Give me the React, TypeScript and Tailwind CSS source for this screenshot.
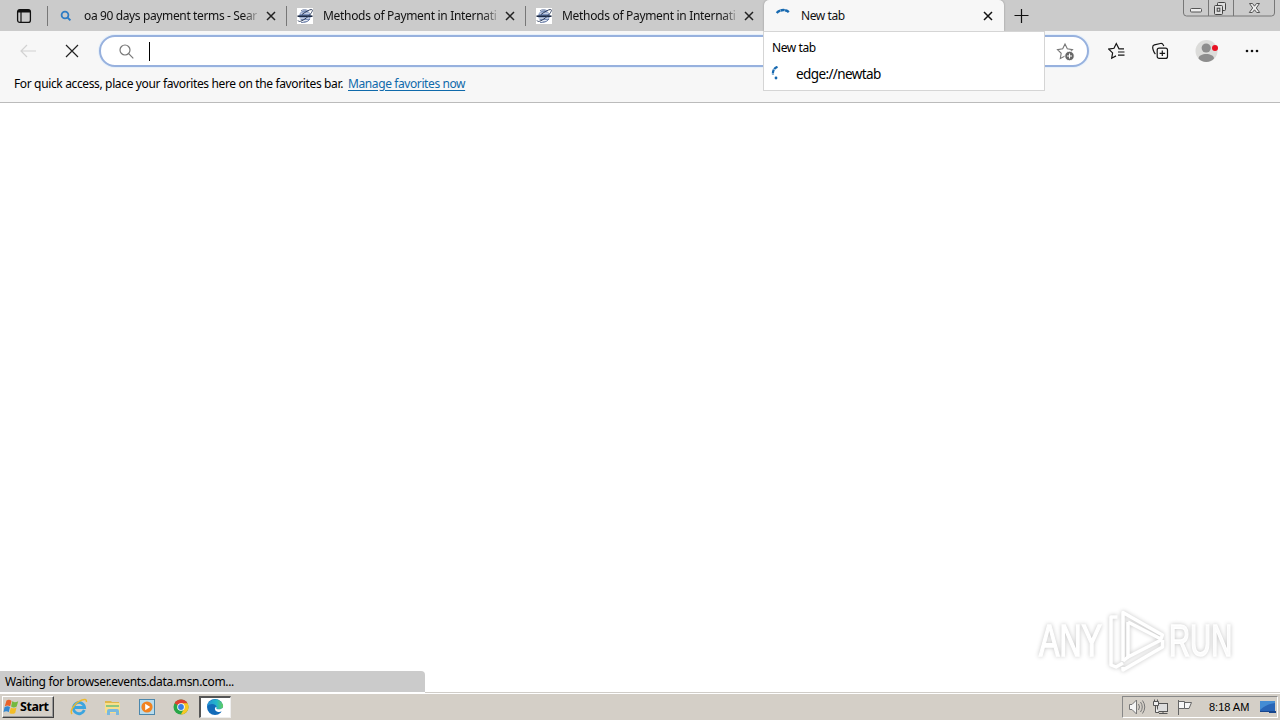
import { ReactNode } from "react";
import clsx from "clsx";

interface TabProps {
    title: string,
    icon: ReactNode,
    titleClass: string
}

function CloseIcon({ color = "#222" }: { color?: string }) {
    return (
        <svg width="10" height="10" viewBox="0 0 10 10" fill="none" stroke={color} strokeWidth="1.5">
            <path d="M1 1l8 8M9 1L1 9" />
        </svg>
    )
}

function SearchFavicon() {
    return (
        <svg width="12" height="12" viewBox="0 0 12 12" fill="none" stroke="#2f7cc4" strokeWidth="1.8">
            <circle cx="5" cy="5" r="3.4" />
            <path d="M7.4 7.4l3 3" strokeWidth="2" />
        </svg>
    )
}

function GlobeFavicon() {
    return (
        <svg width="16" height="16" viewBox="0 0 16 16" fill="none">
            <rect width="16" height="16" fill="#fff" />
            <circle cx="8" cy="8" r="5.8" fill="#7d93bd" />
            <path d="M3.5 5.2h9M2.5 10.2h10M5 12.5h6" stroke="#e4eaf4" strokeWidth="1" />
            <path d="M0.5 8.2h15" stroke="#1d2b45" strokeWidth="1.6" />
            <path d="M1 12.5C2 15 7 12 11 8.5S16.5 1.5 14.5 1.5 9 3.5 5 6.5" stroke="#33415f" strokeWidth="1" />
            <path d="M4 2.8C6 1.3 9 1.6 11 2.6M4 14.4c3 .5 7-.4 9-3.4" stroke="#4b6191" strokeWidth="0.8" />
        </svg>
    )
}

function Tab({ title, icon, titleClass }: TabProps) {
    return (
        <div className="flex w-[239px] h-[31px] items-center relative">
            <span className="w-px h-5 bg-[#777] shrink-0" />
            {icon}
            <div className={clsx("whitespace-nowrap [mask-image:linear-gradient(to_right,black_90%,transparent)]", titleClass)}>{title}</div>
            <span className="absolute right-[10px] top-[11px]"><CloseIcon /></span>
        </div>
    )
}

function TabStrip() {
    return (
        <header className="flex h-[31px] bg-[#cbcbcb] text-[12px] text-[#111] relative">
            <div className="w-[47px] h-[31px] flex items-center justify-center">
                <svg width="16" height="16" viewBox="0 0 16 16" fill="none" stroke="#111">
                    <rect x="1.6" y="1.6" width="12.8" height="12.8" rx="2.2" strokeWidth="1.3" />
                    <path d="M2 3.2h12" strokeWidth="2.6" />
                    <path d="M5 4v10" strokeWidth="1.2" />
                </svg>
            </div>
            <Tab title="oa 90 days payment terms - Sear" titleClass="w-[177px] tracking-[-0.37px]" icon={<span className="w-[36px] pl-[12px] shrink-0"><SearchFavicon /></span>} />
            <Tab title="Methods of Payment in Internati" titleClass="w-[178px] tracking-[-0.31px]" icon={<span className="w-[36px] pl-[10px] shrink-0"><GlobeFavicon /></span>} />
            <Tab title="Methods of Payment in Internati" titleClass="w-[178px] tracking-[-0.31px]" icon={<span className="w-[36px] pl-[10px] shrink-0"><GlobeFavicon /></span>} />
            <div className="w-[240px] bg-[#f7f7f7] rounded-t-[5px] flex items-center relative shadow-[0_0_2px_#888]">
                <svg className="ml-[11px]" width="16" height="16" viewBox="0 0 16 16" fill="none" stroke="#1769b0" strokeWidth="2.4">
                    <path d="M1.7 5C5 1.2 11 1.2 14 4.4" strokeDasharray="4.2 .4" />
                </svg>
                <span className="ml-[10px] tracking-[-0.4px]">New tab</span>
                <span className="absolute right-[11px] top-[11px]"><CloseIcon color="#111" /></span>
            </div>
            <svg className="ml-[10px] mt-2" width="16" height="16" viewBox="0 0 16 16" stroke="#111" strokeWidth="1.2">
                <path d="M7.5 1v14M.5 7.5h14" />
            </svg>
            <WindowButtons />
        </header>
    )
}

function WindowButtons() {
    return (
        <svg className="ml-auto" width="98" height="18" viewBox="0 0 98 18" fill="none" stroke="#777">
            <path d="M1.5 0v13q0 3 3 3h85q3 0 3-3V0M26.5 0v16M51.5 0v16" />
            <rect x="8.5" y="8.5" width="11" height="3.5" rx="1" stroke="#555" fill="#eee" />
            <g stroke="#444" fill="#ddd">
                <rect x="35.5" y="2.5" width="8" height="8" rx="1" />
                <rect x="32.5" y="5.5" width="8" height="9" rx="1" />
                <rect x="35.2" y="8.2" width="2.6" height="3" />
            </g>
            <path d="M67.5 3.5h3l2 2.7 2-2.7h3L74.3 8l3.4 4.5h-3l-2.2-2.7-2.2 2.7h-3L70.7 8z" stroke="#555" fill="#eee" />
        </svg>
    )
}

function Toolbar() {
    return (
        <div className="flex h-[39px] pt-1 relative">
            <div className="w-[99px] flex h-8 items-center shrink-0">
                <svg className="ml-5" width="17" height="14" viewBox="0 0 17 14" fill="none" stroke="#d2d2d2" strokeWidth="1.2">
                    <path d="M16 7H1M7 1L1 7l6 6" />
                </svg>
                <svg className="ml-[28px]" width="14" height="14" viewBox="0 0 14 14" fill="none" stroke="#222" strokeWidth="1.2">
                    <path d="M1 1l12 12M13 1L1 13" />
                </svg>
            </div>
            <div className="w-[990px] h-8 rounded-full border-2 border-[#97b1de] bg-white flex items-center shrink-0 shadow-[0_0_0_1px_#e6f0fa]">
                <svg className="ml-[18px]" width="15" height="15" viewBox="0 0 15 15" fill="none" stroke="#777" strokeWidth="1.2">
                    <circle cx="6" cy="6" r="5" />
                    <path d="M9.7 9.7l4.6 4.6" />
                </svg>
                <span className="w-px h-[19px] bg-black ml-[15px]" />
                <svg className="ml-auto mr-[11px] mt-px" width="20" height="20" viewBox="0 0 20 20" fill="none">
                    <path d="M9 2l2.3 4.8 5.2.8-3.6 3.6.3 4.5L9 14l-4.7 2.4.9-5.1L1.5 7.6l5.2-.8z" stroke="#777" strokeWidth="1.1" />
                    <circle cx="13.5" cy="14" r="4.7" fill="#666" stroke="#fff" strokeWidth=".8" />
                    <path d="M11 14h5M13.5 11.5v5" stroke="#fff" strokeWidth="1.1" />
                </svg>
            </div>
            <div className="flex items-center h-8 shrink-0">
                <svg className="ml-[19px]" width="17" height="18" viewBox="0 0 17 18" fill="none" stroke="#151515" strokeWidth="1.2">
                    <path d="M16 6.8h-5L8.3 1.5 6 6.3l-5.2.8 3.8 3.8-.9 5.3L8 13.9M10 10h6.5M10 13.2h6.5" />
                </svg>
                <svg className="ml-[27px]" width="17" height="18" viewBox="0 0 17 18" fill="none" stroke="#151515" strokeWidth="1.2">
                    <rect x="5.2" y="6.1" width="10.3" height="10.3" rx="2" />
                    <path d="M10.3 8.5v5.6M7.6 11.3h5.5M3.4 12.2C1.7 10.5.6 6.5.7 5.2.7 4 1.4 3.2 2.4 2.9l6-1.4c1.4-.3 2.4.3 2.9 1.4l.5 1" />
                </svg>
                <svg className="ml-[26px]" width="26" height="24" viewBox="0 0 26 24">
                    <circle cx="11.5" cy="12" r="11" fill="#dcdcda" />
                    <circle cx="11.2" cy="9" r="4.6" fill="#8d8d8d" />
                    <path d="M3.5 19.5c0-6 15.5-6 15.5 0-3.5 4.5-12 4.5-15.5 0z" fill="#8d8d8d" />
                    <circle cx="20" cy="9" r="3" fill="#e81123" />
                </svg>
                <svg className="ml-[24px]" width="16" height="4" viewBox="0 0 16 4" fill="#111">
                    <circle cx="2" cy="2" r="1.3" />
                    <circle cx="7" cy="2" r="1.3" />
                    <circle cx="12" cy="2" r="1.3" />
                </svg>
            </div>
        </div>
    )
}

function TabPreview() {
    return (
        <aside className="absolute left-[763px] top-[31px] w-[282px] h-[60px] bg-white border border-[#d5d5d5] text-black">
            <p className="text-[12px] leading-4 mt-2 ml-2 tracking-[-0.4px]">New tab</p>
            <div className="flex items-center h-5 mt-2 ml-[7px]">
                <svg width="10" height="16" viewBox="0 0 10 16" fill="none" stroke="#1769b0" strokeWidth="2.2">
                    <path d="M6.5 .8Q1.2 3 2 8.7" strokeDasharray="4 .6" />
                    <circle cx="5" cy="12" r="1.4" fill="#1769b0" stroke="none" />
                </svg>
                <span className="ml-[15px] text-[13.5px] tracking-[-0.6px]">edge://newtab</span>
            </div>
        </aside>
    )
}

function Watermark() {
    return (
        <div className="absolute left-[1039px] top-[606px] flex items-center h-[70px] w-[200px] [filter:drop-shadow(0_0_2px_#c4c4c4)]">
            <span className="w-[66px] text-[45px] font-normal [font-family:'Liberation_Sans'] text-white origin-left scale-x-[0.68] [-webkit-text-stroke:1.5px_white]">ANY</span>
            <svg className="shrink-0" width="62" height="68" viewBox="0 0 62 68" fill="none" stroke="#fff" strokeWidth="3.5" strokeLinejoin="round">
                <path d="M18 54V5.5L57.5 28 56 32 23 15" />
                <path d="M12.5 10H6v48l5 2 7-4M23 15v35l33-17" />
                <path d="M18 60v3L57.5 40v-7M18 54l5-4" />
            </svg>
            <span className="ml-[2px] text-[45px] [font-family:'Liberation_Sans'] text-[#fcfcfc] origin-left scale-x-[0.65] [-webkit-text-stroke:1.5px_white]">RUN</span>
        </div>
    )
}

function QuickLaunch() {
    return (
        <div className="flex items-center h-6 ml-4">
            <svg width="18" height="18" viewBox="0 0 18 18" fill="none">
                <path d="M14.3 12A5.6 5.6 0 1 1 14.6 9.5H5" stroke="#3ba5df" strokeWidth="2.8" />
                <path d="M2 16C-.5 13 4 6 9 3.3s8-2.5 7.3.7" stroke="#edb92c" strokeWidth="1.5" />
            </svg>
            <svg className="ml-4" width="18" height="18" viewBox="0 0 18 18">
                <path d="M1 3h6l1 1h7v3H1z" fill="#dfb64b" />
                <path d="M1 5h15v10H1z" fill="#f8df8b" />
                <path d="M2 7h13v2H2z" fill="#8dc681" />
                <path d="M3 17v-4q0-2 2-2h8q2 0 2 2v4h-3v-3H6v3z" fill="#79b9de" />
            </svg>
            <svg className="ml-4" width="18" height="18" viewBox="0 0 18 18">
                <rect x="1.5" y="1.5" width="15" height="15" fill="#b8dced" stroke="#4b87ac" />
                <circle cx="9" cy="9" r="5.6" fill="#f18320" />
                <path d="M7.2 5.8v6.4l5-3.2z" fill="#fff" />
            </svg>
            <svg className="ml-4" width="18" height="18" viewBox="0 0 18 18">
                <circle cx="9" cy="9" r="7.5" fill="#28a647" />
                <path d="M9 9L2.5 5.2A7.5 7.5 0 0 1 15.5 5.2z" fill="#df4031" />
                <path d="M9 5.2h6.5A7.5 7.5 0 0 1 8.8 16.5L12.5 10z" fill="#f8c824" />
                <circle cx="9" cy="9" r="3.8" fill="#fff" />
                <circle cx="9" cy="9" r="2.9" fill="#397fe4" />
            </svg>
        </div>
    )
}

function Taskbar() {
    return (
        <footer className="h-[27px] bg-[#d4cfc7] border-t border-white flex items-center text-[12px] text-black">
            <button className="ml-[2px] w-[52px] h-[22px] border border-t-white border-l-white border-r-[#404040] border-b-[#404040] shadow-[inset_-1px_-1px_#999] flex items-center">
                <svg className="shrink-0" width="16" height="16" viewBox="0 0 15 16">
                    <path d="M3 1.5Q6 0 8 2L6.7 7.3Q4 5.5 1.3 7.3z" fill="#e8622a" />
                    <path d="M8.7 2.3Q11 4 14.7 2.2l-1.5 5.4q-3 1.8-5.6 0z" fill="#75b941" />
                    <path d="M1 8.2Q4 6.5 6.5 8.1l-1.3 5.2Q3 11.5 0 13.2z" fill="#3388d1" />
                    <path d="M7.4 8.5Q10 10.2 13 8.5l-1.3 5.4q-3 1.8-5.8 0z" fill="#f3bd27" />
                </svg>
                <span className="ml-px font-bold [font-family:'Noto_Sans'] text-[12.5px] tracking-[-0.45px]">Start</span>
            </button>
            <QuickLaunch />
            <div className="ml-[9px] w-[32px] h-[22px] bg-white border-t-2 border-l-2 border-t-[#555] border-l-[#555] border-r border-b border-r-[#eee] border-b-[#eee] flex items-center justify-center">
                <svg className="mr-px mb-px" width="18" height="18" viewBox="0 0 18 18">
                    <defs>
                        <linearGradient id="edgeTop" x1="0" x2="1">
                            <stop stopColor="#258fd7" />
                            <stop offset=".6" stopColor="#24b7c9" />
                            <stop offset="1" stopColor="#65ce58" />
                        </linearGradient>
                    </defs>
                    <circle cx="9" cy="9" r="8" fill="#126bb9" />
                    <path d="M1 8.5C2 .5 14-1.5 17 7c.7 3-1.7 4.6-5.4 4.2-1.6-.3-1.6-1-1-1.8C11 6.6 5 4 1 8.5z" fill="url(#edgeTop)" />
                    <path d="M10.6 9.5c-.6.8-.3 1.5 1 1.7 2.5.3 4.3-.3 5.4-1.7l1 4-1.3.3-1.2-.2c-2.3.9-5.2.3-6.2-1.4-.9-1.5-.2-2.6.7-3.4z" fill="#fff" />
                </svg>
            </div>
            <div className="ml-auto mr-[2px] w-[156px] h-[22px] border border-t-[#888] border-l-[#888] border-b-white border-r-white flex items-center">
                <svg className="ml-[5px]" width="18" height="18" viewBox="0 0 18 18" fill="none" stroke="#777">
                    <path d="M1.5 6.5H4L8.5 2v14L4 11.5H1.5z" fill="#f5f5f5" />
                    <path d="M10.5 6q2 3 0 6M12.5 4q3.5 5 0 10M14.5 2.5q4.5 6.5 0 13" />
                </svg>
                <svg className="ml-[6px]" width="18" height="18" viewBox="0 0 18 18" fill="none" stroke="#555">
                    <rect x="5.5" y="5.5" width="10" height="8" fill="#ddd" />
                    <path d="M1.5 3.5h5v4h-5zM2.5 1.5v2M5.5 1.5v2M3.5 7.5v7H7M7 15.5h8.5M11 13.5v2" fill="#eee" />
                </svg>
                <svg className="ml-[6px]" width="18" height="18" viewBox="0 0 18 18" fill="none" stroke="#666">
                    <path d="M2.5 2v15M2.5 3.5h6v7h-6M8.5 4.5h7l-2.5 6H8.5" fill="#f7f7f7" />
                </svg>
                <span className="ml-[15px] text-[11px] [font-family:'Liberation_Sans'] whitespace-nowrap">8:18 AM</span>
                <svg className="ml-auto mr-px" width="16" height="16" viewBox="0 0 16 16">
                    <path d="M0 2h15v10H0z" fill="#2865b7" />
                    <path d="M0 2h15v2Q6 5 0 11z" fill="#438cd4" />
                    <path d="M0 12h16v2H9v-1H0z" fill="#17458c" />
                </svg>
            </div>
        </footer>
    )
}

export default function App() {
    return (
        <div className="w-[1280px] h-[720px] overflow-hidden relative bg-white flex flex-col [font-family:'Noto_Sans','Open_Sans',sans-serif]">
            <TabStrip />
            <div className="h-[72px] bg-[#f7f7f7] border-b border-[#bbb]">
                <Toolbar />
                <div className="flex text-[12px] leading-4 mt-[6px] ml-[14px] text-black whitespace-nowrap">
                    <p className="tracking-[-0.36px] w-[334px]">For quick access, place your favorites here on the favorites bar.</p>
                    <a className="text-[#0f6aab] underline underline-offset-2 tracking-[-0.4px]">Manage favorites now</a>
                </div>
            </div>
            <TabPreview />
            <main className="flex-1 flex flex-col justify-end">
                <div className="w-[425px] h-[21px] bg-[#cbcbcb] rounded-tr-[4px] pl-[5px] text-[12px] leading-[21px] text-black mb-px">
                    <span className="tracking-[-0.33px]">Waiting for browser.events.data.msn.com...</span>
                </div>
                <div className="h-px w-full bg-[#d0cdc8] -mt-px pl-[425px] bg-clip-content" />
            </main>
            <Watermark />
            <Taskbar />
        </div>
    )
}
